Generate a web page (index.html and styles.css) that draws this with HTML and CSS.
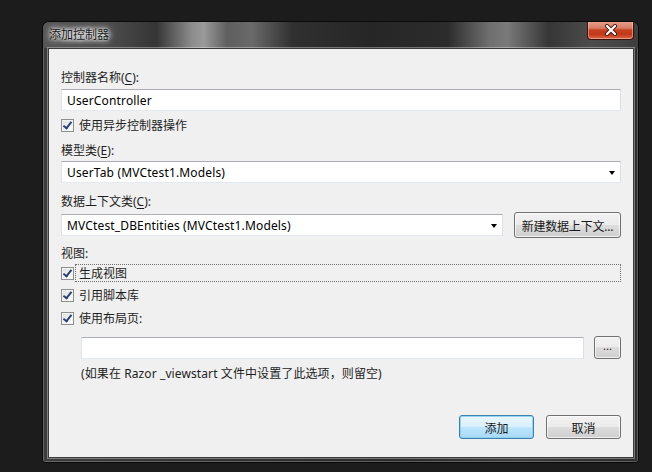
FILE: index.html
```html
<!DOCTYPE html>
<html lang="zh-CN">
<head>
<meta charset="utf-8">
<title>添加控制器</title>
<link rel="stylesheet" href="styles.css">
</head>
<body>
<div class="window">
  <div class="titlebar">
    <span class="title">添加控制器</span>
    <div class="close">
      <svg width="14" height="12" viewBox="0 0 14 12">
        <path d="M3 2 L11 10 M11 2 L3 10" stroke="#4a1a12" stroke-width="4" stroke-linecap="round"/>
        <path d="M3 2 L11 10 M11 2 L3 10" stroke="#ffffff" stroke-width="2.2" stroke-linecap="round"/>
      </svg>
    </div>
  </div>
  <div class="client">
    <div class="label l1">控制器名称(<u>C</u>):</div>
    <div class="textbox tb1">UserController</div>
    <div class="check r-async"><span class="box checked"></span><span class="ctext">使用异步控制器操作</span></div>
    <div class="label l2">模型类(<u>E</u>):</div>
    <div class="textbox combo cb1"><span>UserTab (MVCtest1.Models)</span><span class="arrow"></span></div>
    <div class="label l3">数据上下文类(<u>C</u>):</div>
    <div class="row ctx">
      <div class="textbox combo cb2"><span>MVCtest_DBEntities (MVCtest1.Models)</span><span class="arrow"></span></div>
      <div class="btn newctx">新建数据上下文...</div>
    </div>
    <div class="label l4">视图:</div>
    <div class="check r-gen"><span class="box checked"></span><span class="ctext focus">生成视图</span></div>
    <div class="check r-script"><span class="box checked"></span><span class="ctext">引用脚本库</span></div>
    <div class="check r-layout"><span class="box checked"></span><span class="ctext">使用布局页:</span></div>
    <div class="row layoutrow">
      <div class="textbox tb2"></div>
      <div class="btn dots">...</div>
    </div>
    <div class="hint">(如果在 Razor _viewstart 文件中设置了此选项，则留空)</div>
    <div class="row actions">
      <div class="btn default">添加</div>
      <div class="btn">取消</div>
    </div>
  </div>
</div>
</body>
</html>
```
FILE: styles.css
```css
html, body {
  margin: 0;
  padding: 0;
}
body {
  background: #1c1c1c;
  width: 652px;
  height: 472px;
  overflow: hidden;
  font-family: "Segoe UI", "Noto Sans", "Noto Sans CJK SC", sans-serif;
  font-size: 12px;
  color: #000;
}
.window {
  margin: 21px 0 0 42px;
  width: 597px;
  height: 442px;
  box-sizing: border-box;
  border: 1px solid #0a0a0a;
  border-radius: 7px 7px 3px 3px;
  background:
    linear-gradient(90deg, #3c3c3c 0%, #2c2c2c 60%, #3a3a3a 80%, #2e2e2e 100%);
  box-shadow: inset 0 0 0 1px rgba(255,255,255,0.22);
  display: flex;
  flex-direction: column;
  overflow: hidden;
}
.titlebar {
  height: 26px;
  display: flex;
  align-items: flex-start;
  padding-left: 5px;
  padding-right: 4px;
  background:
    linear-gradient(90deg,
      #555555 0%, #4a4a4a 12%, #353535 19%, #8c8c8c 25%, #9a9a9a 27%,
      #5e5e5e 31%, #6a6a6a 35%, #303030 42%, #262626 55%, #2c2c2c 68%,
      #6f6f6f 75%, #7a7a7a 78%, #363636 85%, #4c4c4c 92%, #3e3e3e 100%);
  border-radius: 6px 6px 0 0;
}
.title {
  margin-top: 4px;
  padding: 0 4px 0 1px;
  line-height: 18px;
  color: #1a1a1a;
  text-shadow: 0 0 6px rgba(255,255,255,0.95), 0 0 3px rgba(255,255,255,0.9), 0 0 10px rgba(220,220,220,0.8);
  background: radial-gradient(ellipse at center, rgba(210,210,210,0.55) 0%, rgba(210,210,210,0) 75%);
}
.close {
  margin-left: auto;
  margin-top: -1px;
  width: 47px;
  height: 19px;
  box-sizing: border-box;
  border: 1px solid #3a1008;
  border-top: none;
  border-radius: 0 0 4px 4px;
  background: linear-gradient(180deg, #e7a491 0%, #d77b63 40%, #c4401f 50%, #c3391a 75%, #d86a48 100%);
  box-shadow: inset 0 0 0 1px rgba(255,220,210,0.45);
  display: flex;
  align-items: center;
  justify-content: center;
}
.client {
  flex: 1;
  margin: 0 4px 4px 5px;
  box-sizing: border-box;
  border: 1px solid #3a3a3a;
  box-shadow: 0 0 0 1px rgba(255,255,255,0.35);
  background: #f0f0f0;
  padding: 20px 12px 0 12px;
  display: flex;
  flex-direction: column;
}
.label {
  height: 16px;
  line-height: 18px;
  color: #1e1e1e;
  text-underline-offset: 2px;
}
.textbox {
  height: 22px;
  box-sizing: border-box;
  background: #fff;
  border: 1px solid #e3e9ef;
  border-top-color: #abadb3;
  border-left-color: #e2e3ea;
  border-right-color: #dbdfe6;
  padding-left: 5px;
  padding-top: 2px;
  line-height: 18px;
  letter-spacing: 0.15px;
  display: flex;
  align-items: center;
}
.tb1 { margin-top: 4px; }
.combo { justify-content: space-between; padding-right: 5px; }
.arrow {
  width: 0;
  height: 0;
  border-left: 3.5px solid transparent;
  border-right: 3.5px solid transparent;
  border-top: 4px solid #000;
}
.check {
  height: 16px;
  display: flex;
  align-items: center;
}
.box {
  width: 13px;
  height: 13px;
  box-sizing: border-box;
  border: 1px solid #8e8f8f;
  background: linear-gradient(135deg, #dcdcdc 0%, #f4f4f4 60%, #ffffff 100%);
  box-shadow: inset 0 0 0 1px #f4f4f4;
  flex: none;
  position: relative;
}
.box.checked::after {
  content: "";
  position: absolute;
  left: 3px;
  top: 0px;
  width: 3px;
  height: 7px;
  border-right: 2px solid #2a4176;
  border-bottom: 2px solid #2a4176;
  transform: rotate(38deg);
}
.ctext {
  margin-left: 5px;
  height: 16px;
  line-height: 18px;
  color: #1e1e1e;
}
.r-async { margin-top: 6px; }
.l2 { margin-top: 9px; }
.cb1 { margin-top: 3px; }
.l3 { margin-top: 10px; }
.row { display: flex; align-items: center; }
.ctx { margin-top: 3px; height: 26px; gap: 11px; }
.cb2 { flex: 1; }
.btn {
  box-sizing: border-box;
  border: 1px solid #707070;
  border-radius: 3px;
  background: linear-gradient(180deg, #f2f2f2 0%, #ebebeb 49%, #dddddd 50%, #cfcfcf 100%);
  box-shadow: inset 0 0 0 1px rgba(255,255,255,0.7);
  display: flex;
  align-items: center;
  justify-content: center;
  color: #1a1a1a;
}
.newctx { width: 107px; height: 26px; letter-spacing: -0.2px; padding-top: 1px; }
.l4 { margin-top: 7px; }
.r-gen { margin-top: 3px; height: 18px; }
.focus {
  flex: 1;
  margin-left: 1px;
  height: 18px;
  line-height: 17px;
  box-sizing: border-box;
  border: 1px dotted #6e6e6e;
  padding-left: 3px;
}
.r-script { margin-top: 5px; }
.r-layout { margin-top: 7px; }
.layoutrow { margin-top: 10px; padding-left: 20px; height: 23px; gap: 10px; }
.tb2 { flex: 1; height: 22px; }
.dots { width: 27px; height: 23px; line-height: 10px; padding-bottom: 3px; font-size: 11px; }
.hint {
  margin-top: 6px;
  padding-left: 20px;
  height: 16px;
  line-height: 18px;
  letter-spacing: 0.1px;
  color: #1e1e1e;
}
.actions { margin-top: 34px; justify-content: flex-end; gap: 12px; }
.actions .btn { width: 75px; height: 24px; padding-top: 1px; }
.btn.default {
  border-color: #3c7fb1;
  background: linear-gradient(180deg, #eaf6fd 0%, #d9f0fc 49%, #bee6fd 50%, #a7d9f5 100%);
  box-shadow: inset 0 0 0 1px rgba(140,210,240,0.9);
}
```
